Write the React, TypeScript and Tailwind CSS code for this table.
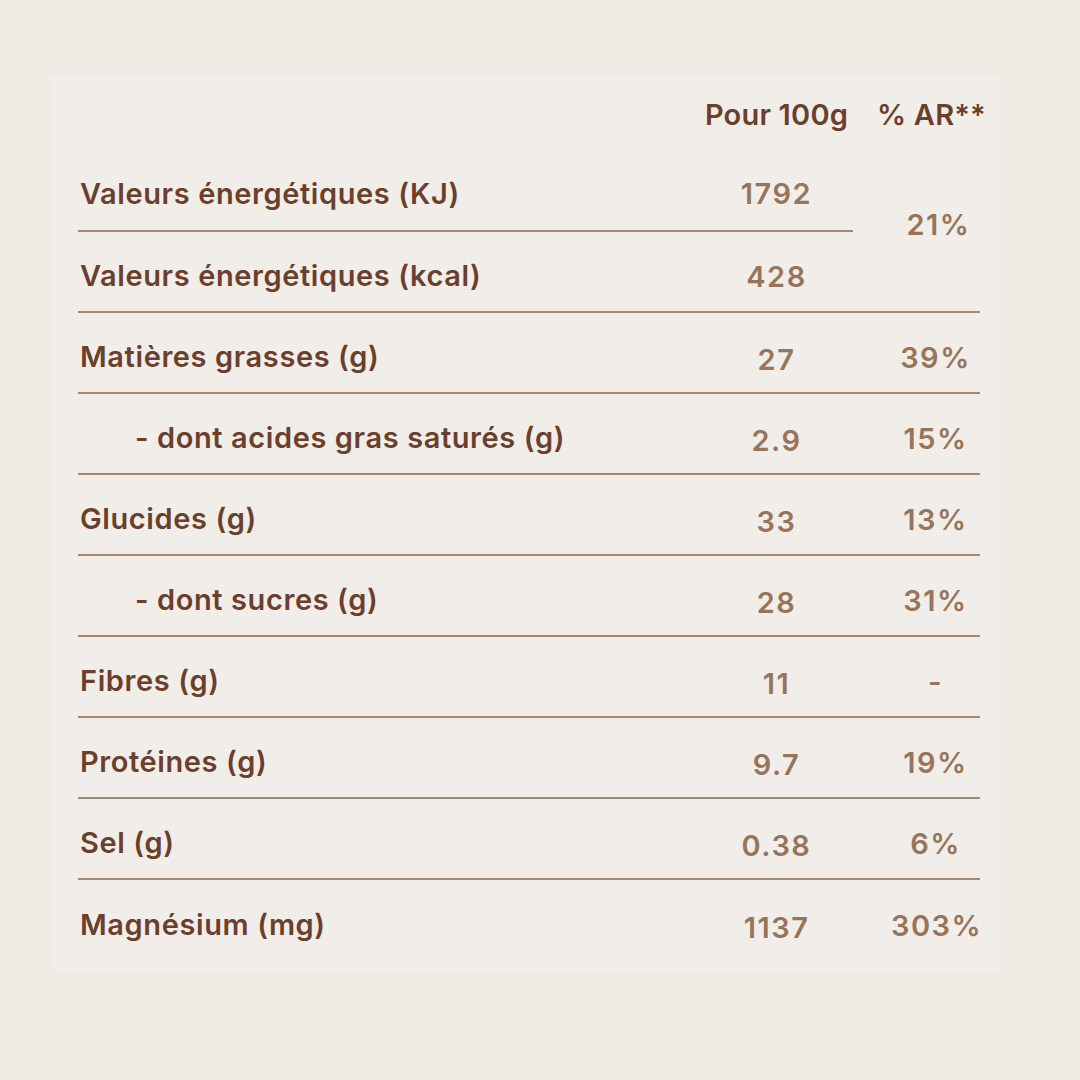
import React from 'react';

type Row = { label: string; value: string; ar: string; indent?: boolean };

const rows: Row[] = [
  { label: 'Matières grasses (g)', value: '27', ar: '39%' },
  { label: '- dont acides gras saturés (g)', value: '2.9', ar: '15%', indent: true },
  { label: 'Glucides (g)', value: '33', ar: '13%' },
  { label: '- dont sucres (g)', value: '28', ar: '31%', indent: true },
  { label: 'Fibres (g)', value: '11', ar: '-' },
  { label: 'Protéines (g)', value: '9.7', ar: '19%' },
  { label: 'Sel (g)', value: '0.38', ar: '6%' },
  { label: 'Magnésium (mg)', value: '1137', ar: '303%' },
];

const font = { fontFamily: 'Inter, "Liberation Sans", sans-serif' };

export default function App() {
  return (
    <div className="w-[1080px] h-[1080px] bg-[#eeeae4] pt-[75px] pl-[50px]" style={font}>
      <div className="w-[950px] h-[895px] bg-[#f1eee9] pl-[28px] pt-[14px]">
        <div className="w-[902px]">
          {/* header */}
          <div className="flex h-[62px] items-center pb-[10px] text-[29px] font-semibold text-[#6b3f2c] tracking-[0.2px]">
            <div className="flex-1" />
            <div className="w-[153px] text-center whitespace-nowrap">Pour 100g</div>
            <div className="w-[127px] pl-[24px] text-center whitespace-nowrap">% AR**</div>
          </div>

          {/* energy rows, shared %AR */}
          <div className="flex border-b-2 border-[#a6876f]">
            <div className="w-[775px]">
              <div className="flex h-[81px] items-center border-b-2 border-[#a6876f]">
                <div className="flex-1 pl-[2px] pt-[6px] text-[29px] font-semibold text-[#6b3f2c] tracking-[0.6px]">Valeurs énergétiques (KJ)</div>
                <div className="w-[153px] pt-[6px] text-center text-[29px] font-semibold text-[#97745a] tracking-[1.5px]">1792</div>
              </div>
              <div className="flex h-[79px] items-center">
                <div className="flex-1 pl-[2px] pt-[8px] text-[29px] font-semibold text-[#6b3f2c] tracking-[0.6px]">Valeurs énergétiques (kcal)</div>
                <div className="w-[153px] pt-[10px] text-center text-[29px] font-semibold text-[#97745a] tracking-[1.5px]">428</div>
              </div>
            </div>
            <div className="w-[127px] pl-[44px] pb-[12px] flex items-center justify-center text-[29px] font-semibold text-[#97745a] tracking-[1.5px]">21%</div>
          </div>

          {rows.map((r, i) => (
            <div
              key={r.label}
              className={
                i < rows.length - 1
                  ? 'flex h-[81px] items-center border-b-2 border-[#a6876f]'
                  : 'flex h-[81px] items-center'
              }
            >
              <div
                className={
                  r.indent
                    ? 'flex-1 pl-[57px] pt-[8px] text-[29px] font-semibold text-[#6b3f2c] tracking-[0.6px]'
                    : 'flex-1 pl-[2px] pt-[8px] text-[29px] font-semibold text-[#6b3f2c] tracking-[0.6px]'
                }
              >
                {r.label}
              </div>
              <div className="w-[153px] pt-[14px] text-center text-[29px] font-semibold text-[#97745a] tracking-[1.5px]">{r.value}</div>
              <div className="w-[127px] pl-[38px] pt-[10px] text-center text-[29px] font-semibold text-[#97745a] tracking-[1.5px]">{r.ar}</div>
            </div>
          ))}
        </div>
      </div>
    </div>
  );
}
